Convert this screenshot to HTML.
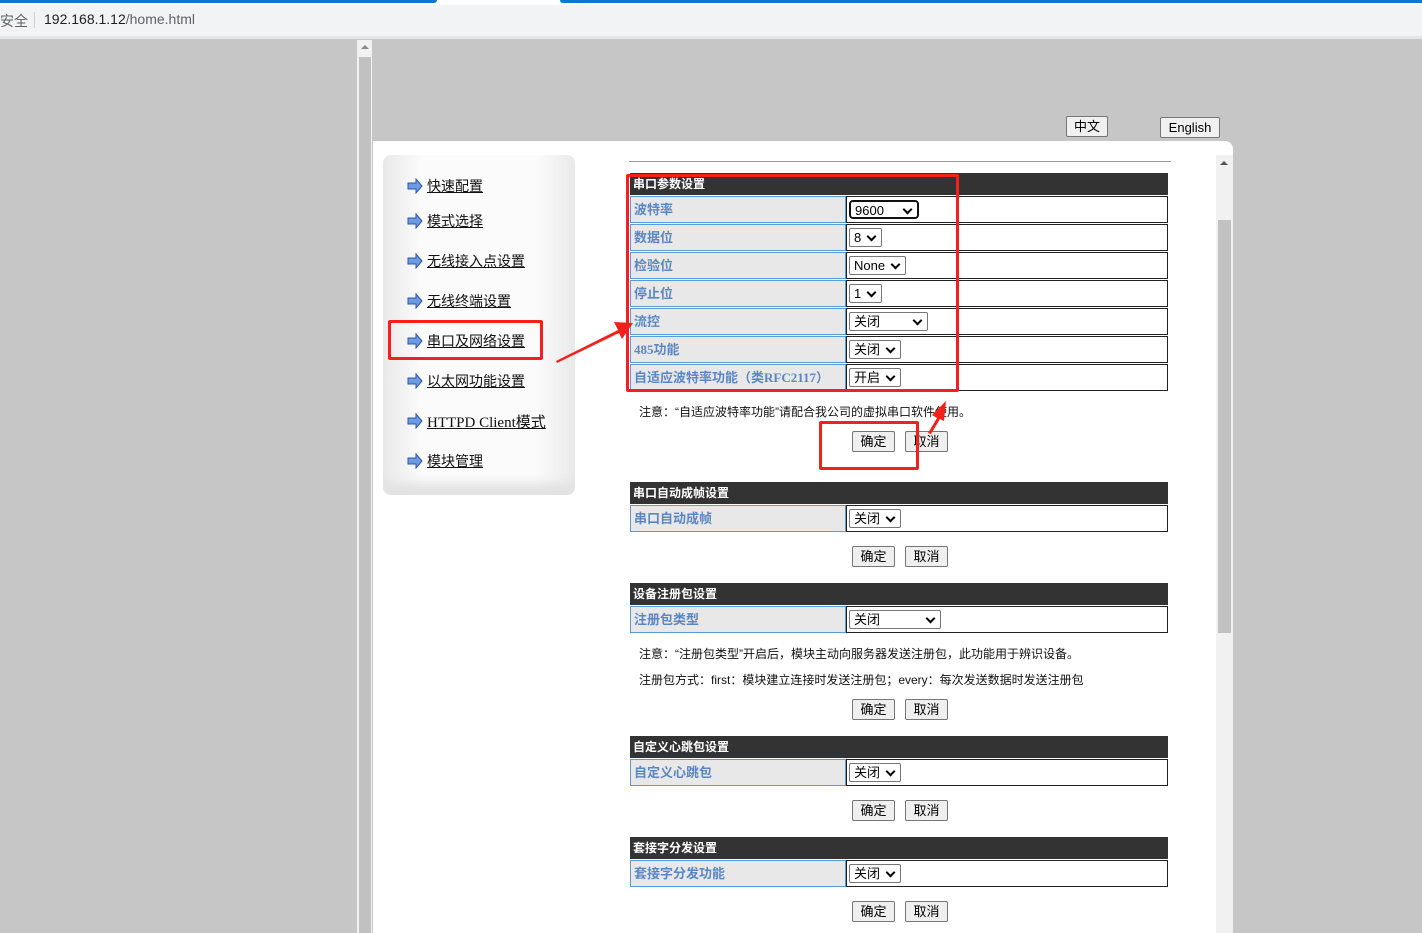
<!DOCTYPE html>
<html><head><meta charset="utf-8"><style>
*{margin:0;padding:0;box-sizing:border-box}
body{width:1422px;height:933px;overflow:hidden;position:relative;background:#c6c6c6;font-family:"Liberation Sans","Noto Sans CJK SC",sans-serif;font-size:13px;color:#000}
.a{position:absolute}
.hdr{position:absolute;left:630px;width:538px;height:22px;background:#333;color:#fff;font-weight:bold;font-size:12px;line-height:22px;padding-left:3px;font-family:"Liberation Serif","Noto Sans CJK SC",sans-serif}
.lab{position:absolute;left:630px;width:216px;height:27px;background:#e8e8e8;border:1px solid #5b9bd5;color:#5b86c4;font-weight:bold;font-size:13px;line-height:25px;padding-left:3px;font-family:"Liberation Serif","Noto Sans CJK SC",sans-serif}
.val{position:absolute;left:846px;width:322px;height:27px;border:1px solid #222;background:#fff}
.sel{position:absolute;left:2px;top:3px;height:19px;border:1px solid #777;border-radius:2px;background:#fff;font-size:13px;line-height:17px;padding-left:4px}
.sel:after{content:"";position:absolute;right:6px;top:4px;width:5px;height:5px;border-right:2px solid #000;border-bottom:2px solid #000;transform:rotate(45deg)}
.btn{position:absolute;width:43px;height:21px;border:1px solid #767676;border-radius:2px;background:#efefef;font-size:13px;text-align:center;line-height:19px}
.note{position:absolute;left:639px;font-size:12px;color:#111}
.mi{position:absolute;left:407px;font-size:14px;color:#111}
.mi svg{position:absolute;left:0;top:2px}
.mi span{position:absolute;left:20px;white-space:nowrap;text-decoration:underline}
.red{position:absolute;border:3px solid #f4201c;border-radius:2px}
</style></head><body>
<div class="a" style="left:0;top:0;width:1422px;height:38px;background:#fff"></div>
<div class="a" style="left:0;top:0;width:437px;height:3px;background:#0a78d2;border-radius:0 0 3px 0"></div>
<div class="a" style="left:560px;top:0;width:862px;height:3px;background:#0a78d2;border-radius:0 0 0 3px"></div>
<div class="a" style="left:0;top:5px;width:1422px;height:31px;background:#f1f3f4"></div>
<div class="a" style="left:0;top:11px;font-size:14px;color:#5f6368">安全</div>
<div class="a" style="left:34px;top:12px;width:1px;height:16px;background:#ccc"></div>
<div class="a" style="left:44px;top:11px;font-size:14px;color:#202124">192.168.1.12<span style="color:#5f6368">/home.html</span></div>
<div class="a" style="left:0;top:36px;width:1422px;height:3px;background:#e6e6e6"></div>

<div class="a" style="left:357px;top:40px;width:15px;height:893px;background:#f1f1f1"></div>
<div class="a" style="left:359px;top:57px;width:12px;height:876px;background:#c1c1c1"></div>
<div class="a" style="left:361px;top:45px;width:0;height:0;border-left:4px solid transparent;border-right:4px solid transparent;border-bottom:4px solid #888"></div>

<div class="btn" style="left:1066px;top:116px;width:42px;background:#f0f0f0;font-size:13px">中文</div>
<div class="btn" style="left:1160px;top:117px;width:60px;background:#f0f0f0;font-size:13px">English</div>

<div class="a" style="left:373px;top:141px;width:860px;height:792px;background:#fff;border-radius:0 8px 0 0"></div>
<div class="a" style="left:1216px;top:155px;width:17px;height:778px;background:#f1f1f1"></div>
<div class="a" style="left:1218px;top:220px;width:13px;height:413px;background:#c1c1c1"></div>
<div class="a" style="left:1220px;top:161px;width:0;height:0;border-left:4px solid transparent;border-right:4px solid transparent;border-bottom:4px solid #555"></div>

<div class="a" style="left:383px;top:155px;width:192px;height:340px;border-radius:8px;background:linear-gradient(90deg,#e9e9e9,#fbfbfb 20%,#fbfbfb 80%,#e9e9e9);box-shadow:inset 0 -18px 10px -6px #e2e2e2"></div>

<svg width="0" height="0" style="position:absolute"><defs><symbol id="ar" viewBox="0 0 16 16"><path d="M1 5h8V1l6 7-6 7v-4H1z" fill="#6e9ae0" stroke="#2a55b0" stroke-width="1"/></symbol></defs></svg>
<div class="mi" style="top:176px"><svg width="16" height="16"><use href="#ar"/></svg><span>快速配置</span></div>
<div class="mi" style="top:211px"><svg width="16" height="16"><use href="#ar"/></svg><span>模式选择</span></div>
<div class="mi" style="top:251px"><svg width="16" height="16"><use href="#ar"/></svg><span>无线接入点设置</span></div>
<div class="mi" style="top:291px"><svg width="16" height="16"><use href="#ar"/></svg><span>无线终端设置</span></div>
<div class="mi" style="top:331px"><svg width="16" height="16"><use href="#ar"/></svg><span>串口及网络设置</span></div>
<div class="mi" style="top:371px"><svg width="16" height="16"><use href="#ar"/></svg><span>以太网功能设置</span></div>
<div class="mi" style="top:411px"><svg width="16" height="16"><use href="#ar"/></svg><span style="font-family:'Liberation Serif','Noto Sans CJK SC',serif;font-size:15px">HTTPD Client模式</span></div>
<div class="mi" style="top:451px"><svg width="16" height="16"><use href="#ar"/></svg><span>模块管理</span></div>

<div class="a" style="left:629px;top:161px;width:542px;height:1px;background:#999"></div>

<div class="hdr" style="top:173px">串口参数设置</div>
<div class="lab" style="top:196px">波特率</div><div class="val" style="top:196px"><div class="sel" style="width:70px;border:2px solid #111;border-radius:4px">9600</div></div>
<div class="lab" style="top:224px">数据位</div><div class="val" style="top:224px"><div class="sel" style="width:33px">8</div></div>
<div class="lab" style="top:252px">检验位</div><div class="val" style="top:252px"><div class="sel" style="width:57px">None</div></div>
<div class="lab" style="top:280px">停止位</div><div class="val" style="top:280px"><div class="sel" style="width:33px">1</div></div>
<div class="lab" style="top:308px">流控</div><div class="val" style="top:308px"><div class="sel" style="width:79px">关闭</div></div>
<div class="lab" style="top:336px">485功能</div><div class="val" style="top:336px"><div class="sel" style="width:52px">关闭</div></div>
<div class="lab" style="top:364px">自适应波特率功能（类RFC2117）</div><div class="val" style="top:364px"><div class="sel" style="width:52px">开启</div></div>
<div class="note" style="top:403px">注意：“自适应波特率功能”请配合我公司的虚拟串口软件使用。</div>
<div class="btn" style="left:852px;top:431px">确定</div><div class="btn" style="left:905px;top:431px">取消</div>

<div class="hdr" style="top:482px">串口自动成帧设置</div>
<div class="lab" style="top:505px">串口自动成帧</div><div class="val" style="top:505px"><div class="sel" style="width:52px">关闭</div></div>
<div class="btn" style="left:852px;top:546px">确定</div><div class="btn" style="left:905px;top:546px">取消</div>

<div class="hdr" style="top:583px">设备注册包设置</div>
<div class="lab" style="top:606px">注册包类型</div><div class="val" style="top:606px"><div class="sel" style="width:92px">关闭</div></div>
<div class="note" style="top:645px">注意：“注册包类型”开启后，模块主动向服务器发送注册包，此功能用于辨识设备。</div>
<div class="note" style="top:671px">注册包方式：first：模块建立连接时发送注册包；every：每次发送数据时发送注册包</div>
<div class="btn" style="left:852px;top:699px">确定</div><div class="btn" style="left:905px;top:699px">取消</div>

<div class="hdr" style="top:736px">自定义心跳包设置</div>
<div class="lab" style="top:759px">自定义心跳包</div><div class="val" style="top:759px"><div class="sel" style="width:52px">关闭</div></div>
<div class="btn" style="left:852px;top:800px">确定</div><div class="btn" style="left:905px;top:800px">取消</div>

<div class="hdr" style="top:837px">套接字分发设置</div>
<div class="lab" style="top:860px">套接字分发功能</div><div class="val" style="top:860px"><div class="sel" style="width:52px">关闭</div></div>
<div class="btn" style="left:852px;top:901px">确定</div><div class="btn" style="left:905px;top:901px">取消</div>

<div class="red" style="left:388px;top:320px;width:155px;height:40px"></div>
<div class="red" style="left:626px;top:174px;width:333px;height:218px"></div>
<div class="red" style="left:819px;top:421px;width:100px;height:49px"></div>
<svg class="a" style="left:0;top:0" width="1422" height="933">
<path d="M556 361 L618 330 L614 322 L633 323 L622 339 L619 333 L557 363 Z" fill="#f4201c"/>
<path d="M928 433 L937 418 L932 415 L946 401 L944 421 L940 419 L931 434 Z" fill="#f4201c"/>
</svg>
</body></html>
